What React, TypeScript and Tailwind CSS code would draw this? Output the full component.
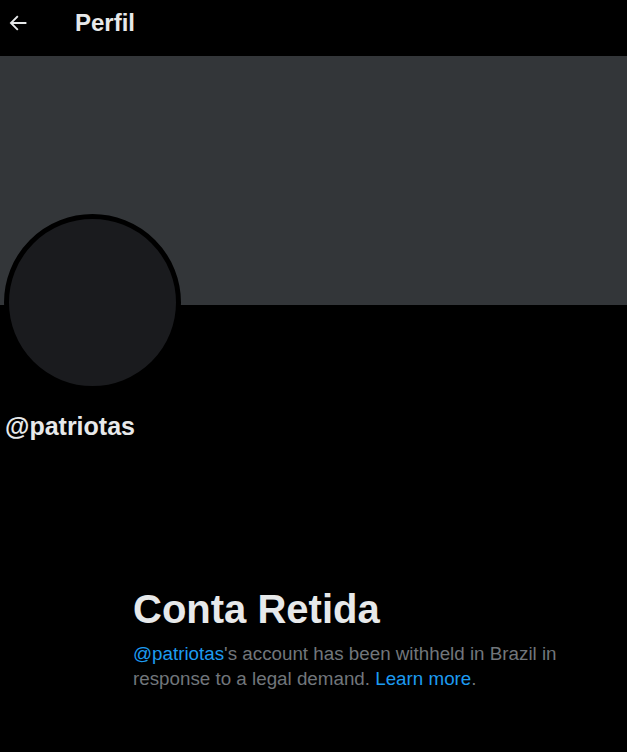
import React from "react";

export default function App() {
  return (
    <div className="w-[627px] h-[752px] bg-black overflow-hidden" style={{ fontFamily: '"Liberation Sans", Arial, sans-serif' }}>
      <div className="h-[56px] flex items-center pb-[11px]">
        <div className="w-[36px] pl-[8px] flex items-center">
          <svg width="20" height="20" viewBox="0 0 24 24" fill="none" stroke="#e7e9ea" strokeWidth="2.2" strokeLinecap="square">
            <path d="M21 12H4M11 4.5L3.5 12L11 19.5" />
          </svg>
        </div>
        <div className="ml-[39px] text-[24px] font-bold text-[#e7e9ea] leading-[28px]">Perfil</div>
      </div>
      <div className="h-[249px] bg-[#333639]" />
      <div className="relative h-[100px]">
        <div className="absolute left-[4px] top-[-91px] w-[177px] h-[177px] rounded-full bg-[#1a1b1e] border-[5px] border-black" />
      </div>
      <div className="pl-[5px] mt-[7px] text-[25px] font-bold text-[#e7e9ea] leading-[28px]">@patriotas</div>
      <div className="ml-[133px] mt-[146px] w-[470px]">
        <div className="text-[40px] font-bold text-[#e7e9ea] leading-[46px]">Conta Retida</div>
        <div className="mt-[9px] text-[18.8px] leading-[25px] text-[#71767b]">
          <span className="text-[#1d9bf0]">@patriotas</span>'s account has been withheld in Brazil in
          <br />
          response to a legal demand. <span className="text-[#1d9bf0]">Learn more</span>.
        </div>
      </div>
    </div>
  );
}
